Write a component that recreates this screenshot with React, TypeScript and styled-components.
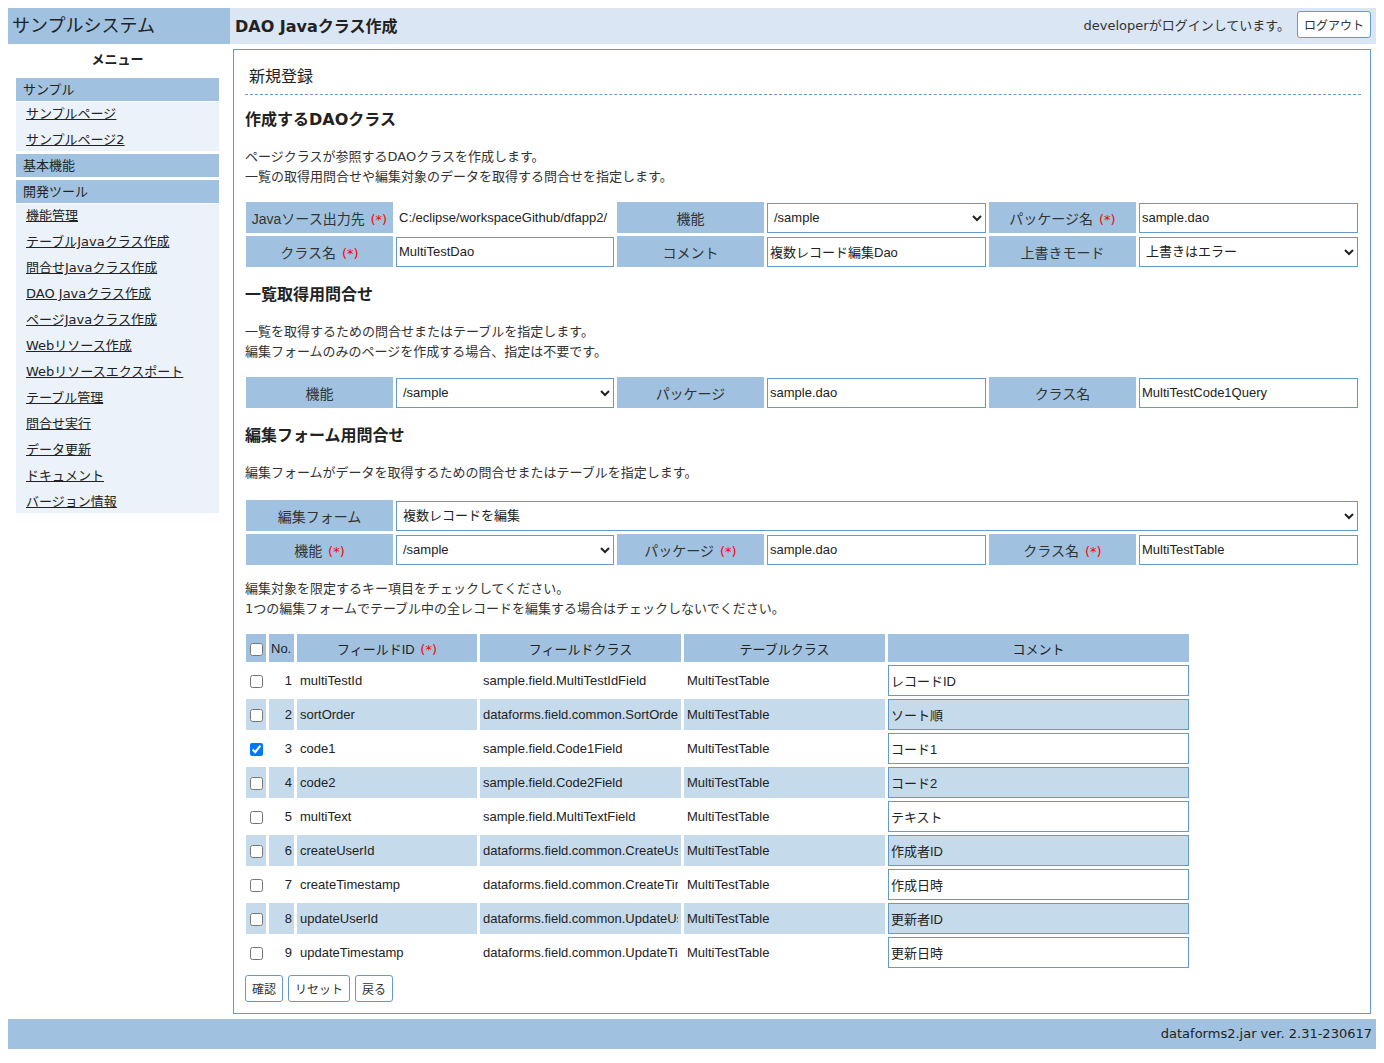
import React from "react";
import styled, { createGlobalStyle } from "styled-components";

const GlobalStyle = createGlobalStyle`
  body {
    margin: 8px;
    background: #ffffff;
    color: #333333;
    font-family: "DejaVu Sans", "Noto Sans CJK JP", sans-serif;
    font-size: 13px;
  }
`;

const menuGroups = [
  { title: "サンプル", items: ["サンプルページ", "サンプルページ2"] },
  { title: "基本機能", items: [] },
  {
    title: "開発ツール",
    items: [
      "機能管理",
      "テーブルJavaクラス作成",
      "問合せJavaクラス作成",
      "DAO Javaクラス作成",
      "ページJavaクラス作成",
      "Webリソース作成",
      "Webリソースエクスポート",
      "テーブル管理",
      "問合せ実行",
      "データ更新",
      "ドキュメント",
      "バージョン情報",
    ],
  },
];

const fields = [
  { id: "multiTestId", cls: "sample.field.MultiTestIdField", comment: "レコードID", checked: false },
  { id: "sortOrder", cls: "dataforms.field.common.SortOrderField", comment: "ソート順", checked: false },
  { id: "code1", cls: "sample.field.Code1Field", comment: "コード1", checked: true },
  { id: "code2", cls: "sample.field.Code2Field", comment: "コード2", checked: false },
  { id: "multiText", cls: "sample.field.MultiTextField", comment: "テキスト", checked: false },
  { id: "createUserId", cls: "dataforms.field.common.CreateUserIdField", comment: "作成者ID", checked: false },
  { id: "createTimestamp", cls: "dataforms.field.common.CreateTimestampField", comment: "作成日時", checked: false },
  { id: "updateUserId", cls: "dataforms.field.common.UpdateUserIdField", comment: "更新者ID", checked: false },
  { id: "updateTimestamp", cls: "dataforms.field.common.UpdateTimestampField", comment: "更新日時", checked: false },
];

const Req = () => <RedMark>(*)</RedMark>;

const FormCols = () => (
  <colgroup>
    <col style={{ width: 147 }} />
    <col style={{ width: 218 }} />
    <col style={{ width: 147 }} />
    <col style={{ width: 219 }} />
    <col style={{ width: 147 }} />
    <col style={{ width: 219 }} />
  </colgroup>
);

const Sidebar = () => (
  <Side>
    <MenuTitle>メニュー</MenuTitle>
    {menuGroups.map((g) => (
      <MenuGroup key={g.title}>
        <GroupHead>{g.title}</GroupHead>
        {g.items.length > 0 && (
          <ItemList>
            {g.items.map((it) => (
              <MenuLink key={it} href="#">
                {it}
              </MenuLink>
            ))}
          </ItemList>
        )}
      </MenuGroup>
    ))}
  </Side>
);

const DaoClassSection = () => (
  <>
    <Heading>作成するDAOクラス</Heading>
    <Desc>
      ページクラスが参照するDAOクラスを作成します。
      <br />
      一覧の取得用問合せや編集対象のデータを取得する問合せを指定します。
    </Desc>
    <FormTable>
      <FormCols />
      <tbody>
        <tr>
          <Label>
            Javaソース出力先 <Req />
          </Label>
          <PlainValue>C:/eclipse/workspaceGithub/dfapp2/</PlainValue>
          <Label>機能</Label>
          <Value>
            <Select defaultValue="/sample">
              <option>/sample</option>
            </Select>
          </Value>
          <Label>
            パッケージ名 <Req />
          </Label>
          <Value>
            <TextInput defaultValue="sample.dao" />
          </Value>
        </tr>
        <tr>
          <Label>
            クラス名 <Req />
          </Label>
          <Value>
            <TextInput defaultValue="MultiTestDao" />
          </Value>
          <Label>コメント</Label>
          <Value>
            <TextInput defaultValue="複数レコード編集Dao" />
          </Value>
          <Label>上書きモード</Label>
          <Value>
            <Select defaultValue="上書きはエラー">
              <option>上書きはエラー</option>
            </Select>
          </Value>
        </tr>
      </tbody>
    </FormTable>
  </>
);

const ListQuerySection = () => (
  <>
    <Heading>一覧取得用問合せ</Heading>
    <Desc>
      一覧を取得するための問合せまたはテーブルを指定します。
      <br />
      編集フォームのみのページを作成する場合、指定は不要です。
    </Desc>
    <FormTable>
      <FormCols />
      <tbody>
        <tr>
          <Label>機能</Label>
          <Value>
            <Select defaultValue="/sample">
              <option>/sample</option>
            </Select>
          </Value>
          <Label>パッケージ</Label>
          <Value>
            <TextInput defaultValue="sample.dao" />
          </Value>
          <Label>クラス名</Label>
          <Value>
            <TextInput defaultValue="MultiTestCode1Query" />
          </Value>
        </tr>
      </tbody>
    </FormTable>
  </>
);

const EditQuerySection = () => (
  <>
    <Heading>編集フォーム用問合せ</Heading>
    <Desc $after={17}>編集フォームがデータを取得するための問合せまたはテーブルを指定します。</Desc>
    <FormTable>
      <FormCols />
      <tbody>
        <tr>
          <Label>編集フォーム</Label>
          <Value colSpan={5}>
            <Select defaultValue="複数レコードを編集">
              <option>複数レコードを編集</option>
            </Select>
          </Value>
        </tr>
        <tr>
          <Label>
            機能 <Req />
          </Label>
          <Value>
            <Select defaultValue="/sample">
              <option>/sample</option>
            </Select>
          </Value>
          <Label>
            パッケージ <Req />
          </Label>
          <Value>
            <TextInput defaultValue="sample.dao" />
          </Value>
          <Label>
            クラス名 <Req />
          </Label>
          <Value>
            <TextInput defaultValue="MultiTestTable" />
          </Value>
        </tr>
      </tbody>
    </FormTable>
    <Desc>
      編集対象を限定するキー項目をチェックしてください。
      <br />
      1つの編集フォームでテーブル中の全レコードを編集する場合はチェックしないでください。
    </Desc>
  </>
);

const FieldTable = () => (
  <FieldGrid>
    <colgroup>
      <col style={{ width: 20 }} />
      <col style={{ width: 25 }} />
      <col style={{ width: 180 }} />
      <col style={{ width: 201 }} />
      <col style={{ width: 201 }} />
      <col style={{ width: 301 }} />
    </colgroup>
    <thead>
      <tr>
        <HeadCell>
          <Check type="checkbox" />
        </HeadCell>
        <HeadCell $left>No.</HeadCell>
        <HeadCell>
          フィールドID <Req />
        </HeadCell>
        <HeadCell>フィールドクラス</HeadCell>
        <HeadCell>テーブルクラス</HeadCell>
        <HeadCell>コメント</HeadCell>
      </tr>
    </thead>
    <tbody>
      {fields.map((f, i) => (
        <FieldRow key={f.id} $even={i % 2 === 1}>
          <CheckCell>
            <Check type="checkbox" defaultChecked={f.checked} />
          </CheckCell>
          <NoCell>{i + 1}</NoCell>
          <DataCell>{f.id}</DataCell>
          <DataCell>
            <Clip>{f.cls}</Clip>
          </DataCell>
          <DataCell>MultiTestTable</DataCell>
          <InputCell>
            <CommentInput defaultValue={f.comment} />
          </InputCell>
        </FieldRow>
      ))}
    </tbody>
  </FieldGrid>
);

const App = () => {
  return (
    <>
      <GlobalStyle />
      <Header>
        <SystemTitle>サンプルシステム</SystemTitle>
        <PageBar>
          <PageTitle>DAO Javaクラス作成</PageTitle>
          <UserArea>
            <span>developerがログインしています。</span>
            <Button>ログアウト</Button>
          </UserArea>
        </PageBar>
      </Header>
      <Body>
        <Sidebar />
        <MainBox>
          <FormTitle>新規登録</FormTitle>
          <DaoClassSection />
          <ListQuerySection />
          <EditQuerySection />
          <FieldTable />
          <ButtonRow>
            <Button>確認</Button>
            <Button>リセット</Button>
            <Button>戻る</Button>
          </ButtonRow>
        </MainBox>
      </Body>
      <Footer>dataforms2.jar ver. 2.31-230617</Footer>
    </>
  );
};

export default App;

const Header = styled.div`
  display: grid;
  grid-template-columns: 222px 1fr;
  height: 36px;
`;

const SystemTitle = styled.div`
  display: flex;
  align-items: center;
  padding: 0 0 4px 4px;
  background: #a0c2e0;
  color: #222222;
  font-size: 18px;
`;

const PageBar = styled.div`
  display: flex;
  align-items: center;
  justify-content: space-between;
  padding: 0 5px;
  background: #dae6f3;
`;

const PageTitle = styled.h1`
  margin: 0 0 3px;
  font-size: 16px;
  font-weight: bold;
  color: #222222;
`;

const UserArea = styled.div`
  display: flex;
  align-items: center;
  gap: 7px;
  color: #333333;
  font-size: 13px;
  margin-bottom: 4px;
`;

const Button = styled.button`
  height: 27px;
  padding: 0 6px;
  background: #ffffff;
  border: 1px solid #6699cc;
  border-radius: 3px;
  color: #333333;
  font-family: "DejaVu Sans", "Noto Sans CJK JP", sans-serif;
  font-size: 12px;
`;

const Body = styled.div`
  display: grid;
  grid-template-columns: 222px 1fr;
  gap: 3px;
`;

const Side = styled.nav`
  padding: 0 11px 0 8px;
`;

const MenuTitle = styled.div`
  padding: 6px 0 8px;
  text-align: center;
  font-weight: bold;
  line-height: 20px;
  color: #222222;
`;

const MenuGroup = styled.div`
  margin-bottom: 3px;
`;

const GroupHead = styled.div`
  height: 23px;
  line-height: 23px;
  padding-left: 7px;
  background: #a0c2e0;
  color: #222222;
`;

const ItemList = styled.div`
  display: flex;
  flex-direction: column;
  gap: 4px;
  margin-top: 1px;
  padding: 1px 0 0 10px;
  background: #ebf2f9;
`;

const MenuLink = styled.a`
  line-height: 22px;
  color: #222222;
  text-decoration: underline;
  width: fit-content;
`;

const MainBox = styled.main`
  margin: 5px 6px 0 0;
  padding: 10px 9px 11px 11px;
  border: 1px solid #6699cc;
`;

const FormTitle = styled.div`
  padding: 7px 4px 7px;
  border-bottom: 1px dashed #6699cc;
  font-size: 16px;
  line-height: 20px;
  color: #222222;
`;

const Heading = styled.h2`
  margin: 13px 0 15px;
  font-size: 16px;
  line-height: 24px;
  font-weight: bold;
  color: #222222;
`;

const Desc = styled.p<{ $after?: number }>`
  margin: 0 0 ${(p) => p.$after ?? 15}px;
  font-size: 13px;
  line-height: 20px;
  color: #333333;
`;

const FormTable = styled.table`
  width: 1118px;
  margin: -3px 0 11px -2px;
  table-layout: fixed;
  border-collapse: separate;
  border-spacing: 3px;
  font-family: "Liberation Sans", "Noto Sans CJK JP", sans-serif;
  font-size: 13px;
`;

const Label = styled.td`
  height: 31px;
  padding: 0;
  background: #a0c2e0;
  text-align: center;
  color: #333333;
  font-size: 14px;
`;

const Value = styled.td`
  padding: 0;
`;

const PlainValue = styled.td`
  padding: 0 3px;
  white-space: nowrap;
  overflow: hidden;
  color: #222222;
`;

const RedMark = styled.span`
  color: #ff0000;
  font-family: "DejaVu Sans", sans-serif;
  font-size: 13px;
  padding-left: 2px;
`;

const TextInput = styled.input`
  box-sizing: border-box;
  width: 100%;
  height: 30px;
  padding: 0 2px;
  background: transparent;
  border: 1px solid #6699cc;
  border-radius: 0;
  color: #222222;
  font-family: "Liberation Sans", "Noto Sans CJK JP", sans-serif;
  font-size: 13px;
  outline: none;
`;

const Select = styled.select`
  box-sizing: border-box;
  width: 100%;
  height: 30px;
  padding: 0 2px;
  background: #ffffff;
  border: 1px solid #6699cc;
  border-radius: 0;
  color: #222222;
  font-family: "Liberation Sans", "Noto Sans CJK JP", sans-serif;
  font-size: 13px;
`;

const FieldGrid = styled.table`
  width: 949px;
  margin: -3px 0 0 -2px;
  table-layout: fixed;
  border-collapse: separate;
  border-spacing: 3px;
  font-family: "Liberation Sans", "Noto Sans CJK JP", sans-serif;
  font-size: 13px;
  color: #222222;
`;

const HeadCell = styled.th<{ $left?: boolean }>`
  height: 28px;
  padding: 0 2px;
  background: #a0c2e0;
  font-weight: normal;
  font-size: 13px;
  text-align: ${(p) => (p.$left ? "left" : "center")};
  white-space: nowrap;
  overflow: hidden;
`;

const FieldRow = styled.tr<{ $even: boolean }>`
  td {
    background: ${(p) => (p.$even ? "#c5daeb" : "#ffffff")};
  }
`;

const CheckCell = styled.td`
  height: 31px;
  padding: 0;
  text-align: center;
`;

const NoCell = styled.td`
  padding: 0 2px 0 0;
  text-align: right;
`;

const DataCell = styled.td`
  padding: 0 3px;
  white-space: nowrap;
  overflow: hidden;
`;

const Clip = styled.div`
  width: 195px;
  overflow: hidden;
  white-space: nowrap;
`;

const InputCell = styled.td`
  padding: 0;
`;

const CommentInput = styled(TextInput)`
  height: 31px;
`;

const Check = styled.input`
  margin: 0;
  width: 13px;
  height: 13px;
  vertical-align: middle;
`;

const ButtonRow = styled.div`
  display: flex;
  gap: 5px;
  margin-top: 4px;
`;

const Footer = styled.footer`
  margin-top: 5px;
  height: 30px;
  padding-right: 4px;
  background: #a0c2e0;
  text-align: right;
  line-height: 30px;
  color: #222222;
`;
